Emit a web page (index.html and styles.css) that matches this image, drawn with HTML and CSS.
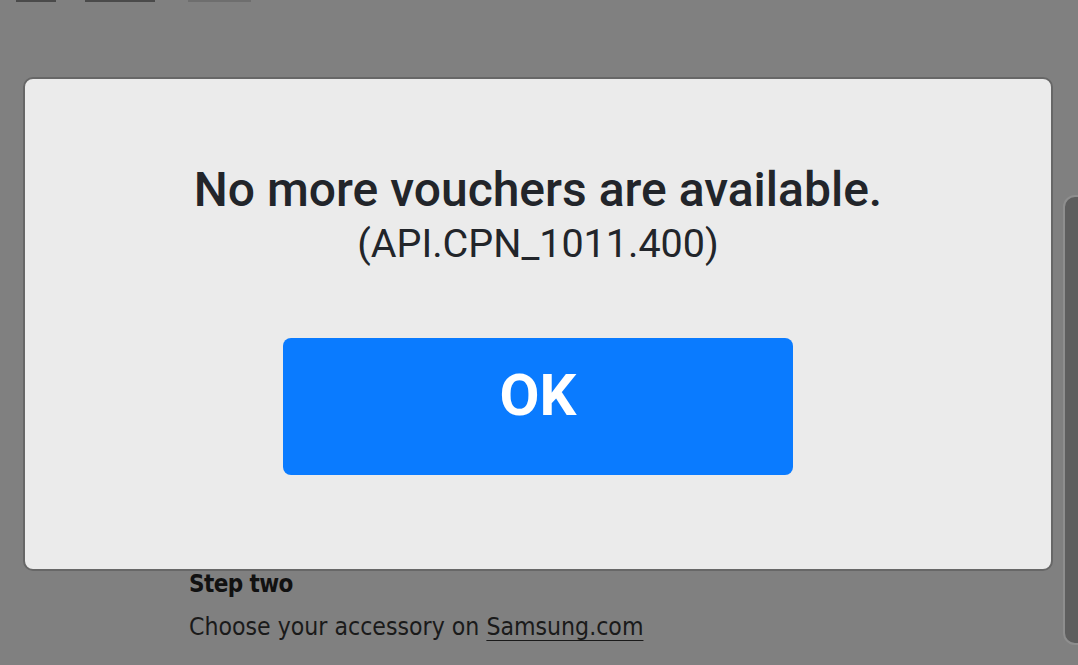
FILE: index.html
```html
<!DOCTYPE html>
<html lang="en">
<head>
<meta charset="utf-8">
<title>Voucher</title>
<link rel="stylesheet" href="styles.css">
</head>
<body>
<div class="page">
  <div class="topbar">
    <span class="tab tab-a"></span>
    <span class="tab tab-b"></span>
    <span class="tab tab-c"></span>
  </div>
  <main class="content">
    <section class="step">
      <h3 class="step-title">Step two</h3>
      <p class="step-text">Choose your accessory on <a class="link" href="#">Samsung.com</a></p>
    </section>
  </main>
  <div class="side-panel"></div>
</div>
<div class="dialog" role="dialog">
  <div class="dialog-message">
    <p class="dialog-title">No more vouchers are available.</p>
    <p class="dialog-code">(API.CPN_1011.400)</p>
  </div>
  <button class="dialog-btn" type="button">OK</button>
</div>
</body>
</html>
```
FILE: styles.css
```css
html, body {
  margin: 0;
  padding: 0;
}
body {
  background: #808080;
  width: 1078px;
  height: 665px;
  overflow: hidden;
  position: relative;
  font-family: "Liberation Sans Narrow", "DejaVu Sans Condensed", sans-serif;
}
.page {
  height: 665px;
}
.topbar {
  display: flex;
  height: 2px;
  padding-left: 16px;
  gap: 29px;
}
.tab {
  display: block;
  height: 2px;
  background: #4a4a4a;
}
.tab-a { width: 40px; }
.tab-b { width: 70px; margin-right: 4px; }
.tab-c { width: 63px; background: #6e6e6e; }
.content {
  padding: 565px 0 0 189px;
}
.step-title {
  margin: 0;
  font-size: 24px;
  font-weight: 700;
  line-height: 34px;
  color: #111;
  letter-spacing: -0.6px;
}
.step-text {
  margin: 10px 0 0;
  font-size: 24.6px;
  line-height: 32px;
  color: #1a1a1a;
}
.link {
  color: inherit;
  text-decoration: underline;
  text-decoration-thickness: 1px;
  text-underline-offset: 5px;
}
.side-panel {
  position: absolute;
  left: 1063px;
  top: 195px;
  width: 40px;
  height: 450px;
  box-sizing: border-box;
  border: 2px solid #8e8e8e;
  border-radius: 12px;
  background: #5e5e5e;
}
.dialog {
  position: absolute;
  left: 23px;
  top: 77px;
  width: 1030px;
  height: 494px;
  box-sizing: border-box;
  border: 2px solid #676767;
  border-radius: 10px;
  background: #ebebeb;
  display: flex;
  flex-direction: column;
  align-items: center;
  padding-top: 83px;
  font-family: Roboto, "Liberation Sans", sans-serif;
}
.dialog-message {
  text-align: center;
  color: #22252a;
}
.dialog-title {
  margin: 0;
  font-size: 48px;
  font-weight: 500;
  line-height: 56px;
}
.dialog-code {
  margin: 0;
  font-size: 39.5px;
  font-weight: 400;
  line-height: 52px;
}
.dialog-btn {
  margin-top: 68px;
  width: 510px;
  height: 137px;
  border: 0;
  border-radius: 8px;
  background: #0a7bff;
  color: #fff;
  font-family: Roboto, "Liberation Sans", sans-serif;
  font-size: 58px;
  font-weight: 700;
  padding: 0 0 24px;
}
```
